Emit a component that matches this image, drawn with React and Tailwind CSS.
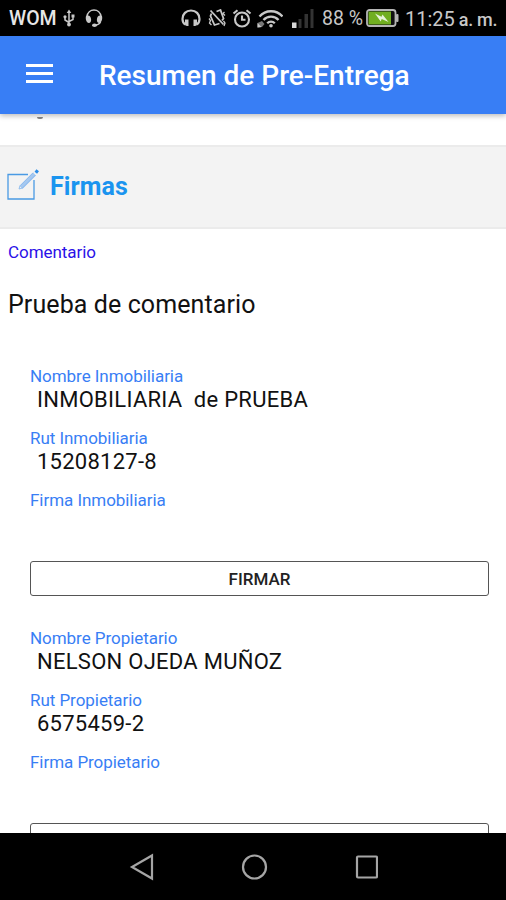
import React from 'react';

const people = [
  { role: 'Inmobiliaria', name: 'INMOBILIARIA  de PRUEBA', rut: '15208127-8' },
  { role: 'Propietario', name: 'NELSON OJEDA MUÑOZ', rut: '6575459-2' },
];

function StatusBar() {
  return (
    <div className="h-9 shrink-0 bg-black text-[#c8c8c8] flex items-center pl-[9px] whitespace-nowrap">
      <span className="w-[54px] text-[19.5px] font-medium leading-none text-[#e6e6e6] pt-[2px]">WOM</span>

      {/* usb */}
      <svg className="w-3 h-[18px] mr-[10px]" viewBox="0 0 12 18" fill="none" stroke="currentColor" strokeWidth="1.5">
        <path d="M6 3v13M2 8v3l4 2.500M10 7v3.500l-4 2" />
        <path d="M6 0.500l2.300 3.500H3.700z" fill="currentColor" stroke="none" />
        <circle cx="6" cy="15.500" r="1.900" fill="currentColor" stroke="none" />
        <circle cx="2" cy="7.800" r="1.600" fill="currentColor" stroke="none" />
        <path d="M8.500 5.500h3v3h-3z" fill="currentColor" stroke="none" />
      </svg>

      {/* headset */}
      <svg className="w-[18px] h-[18px] mr-[78px]" viewBox="0 0 18 18" fill="none" stroke="currentColor" strokeWidth="1.600">
        <path d="M2 9V7.500C2.500 3.500 5.500 1 9 1s6.500 2.500 7 6.500V9" />
        <path d="M1 7c3-1.300 4.800.3 5.100 3.200.2 2.300-.6 3.800-2.300 3.800C1.500 13.700.200 10 1 7zM17 7c-3-1.300-4.800.3-5.100 3.200-.2 2.300.6 3.800 2.300 3.800 2.300-.3 3.600-4 2.800-7z" fill="currentColor" stroke="none" />
        <path d="M15.500 13c-1 2-3 3-5.500 3.200" />
        <ellipse cx="9.500" cy="16.200" rx="2.500" ry="1.700" fill="currentColor" stroke="none" />
      </svg>

      {/* headphones */}
      <svg className="w-5 h-[18px] mr-[7px]" viewBox="0 0 20 18" fill="none" stroke="currentColor" strokeWidth="2.200">
        <path d="M4.500 15.500C2.500 14.500 1.500 12.500 1.500 10 1.500 5 5 1.500 10 1.500s8.500 3.500 8.500 8.500c0 2.500-1 4.500-3 5.500" />
        <path d="M4 10.500h3.500V17H6c-1.300 0-2-.8-2-2zM16 10.500h-3.500V17H14c1.300 0 2-.8 2-2z" fill="currentColor" stroke="none" />
      </svg>

      {/* vibrate off */}
      <svg className="w-[18px] h-[18px] mr-[6px]" viewBox="0 0 18 18" fill="none" stroke="currentColor" strokeWidth="1.800">
        <path d="M8.500 2.500l4-1.500 3 8.500-1.500 2M3.500 4.500L2.500 7l4 9 5-1.500" />
        <path d="M2.500 1.500l13 14" />
        <path d="M1 9.500l1.500 2L1.500 14l2 2M16.500 3l-1.500 1.500 2 2M15.500 12l1.500 2-1 3" strokeWidth="1.300" />
      </svg>

      {/* alarm */}
      <svg className="w-5 h-[19px] mr-[5px]" viewBox="0 0 20 19" fill="none" stroke="currentColor" strokeWidth="2.100">
        <circle cx="10" cy="10.500" r="7" />
        <path d="M10 6.500v4.300h3.500" />
        <path d="M1.500 4.500l4-3.300M18.500 4.500l-4-3.300" />
      </svg>

      {/* wifi with traffic arrow */}
      <svg className="w-[26px] h-[19px] mr-[9px]" viewBox="0 0 26 19" fill="none" stroke="currentColor" strokeWidth="2.300">
        <path d="M2.500 7.500c6-7 17-7 23 0M6.500 11c4-4.500 11-4.500 15 0M10.200 14.200c2.200-2.200 5.400-2.200 7.600 0" />
        <circle cx="14" cy="16.700" r="1.800" fill="currentColor" stroke="none" />
        <path d="M.5 14l4.500-2 2.500 3-2.500 3-4.500.5z" fill="#777" stroke="none" />
        <path d="M.5 18.500V14l4 4z" fill="currentColor" stroke="none" />
      </svg>

      {/* mobile signal */}
      <svg className="w-[22px] h-[19px] mr-[8px]" viewBox="0 0 22 19">
        <rect x="0" y="13.500" width="4.500" height="5.500" fill="#d8d8d8" />
        <path d="M6.500 10h3v9h-3zM12.500 5h3.500v14h-3.500zM18.500 0h3v19h-3z" fill="#333" />
      </svg>

      <span className="w-[44px] text-[19.5px] leading-none pt-[2px]">88 %</span>

      {/* battery */}
      <svg className="w-[33px] h-[18px] mr-[6px]" viewBox="0 0 33 18">
        <rect x="1" y="1" width="28.500" height="16" rx="2.500" fill="#111" stroke="#b5b5b5" strokeWidth="1.800" />
        <rect x="2.500" y="2.500" width="22.500" height="13" fill="#70ae20" />
        <rect x="30" y="5" width="2.500" height="8" rx="1" fill="#b5b5b5" />
        <path d="M9 4.500l6.500 3.300 1-2.300 6 7.500-6.800-3-1 2.500z" fill="#e6f2d8" />
      </svg>

      <span className="text-[20px] leading-none pt-[2px]">11:25</span>
      <span className="text-[18px] font-medium leading-none pt-[3px] ml-1 tracking-[-0.3px]">a. m.</span>
    </div>
  );
}

function Header() {
  return (
    <header className="relative z-10 h-[78px] shrink-0 bg-[#387ef5] text-white flex items-center shadow-[0_2px_5px_rgba(0,0,0,0.26)]">
      <button className="ml-[26px] w-[27px] flex flex-col gap-[5px] mb-[3px]" aria-label="Menu">
        <span className="h-[3px] w-full bg-white" />
        <span className="h-[3px] w-full bg-white" />
        <span className="h-[3px] w-full bg-white" />
      </button>
      <h1 className="ml-[46px] mt-px text-[28px] font-medium leading-8 whitespace-nowrap">Resumen de Pre-Entrega</h1>
    </header>
  );
}

function Label({ children }) {
  return <p className="h-[18px] text-[17px] leading-[18px] tracking-[-0.05px] text-[#387ef5]">{children}</p>;
}

function Person({ person }) {
  return (
    <div className="h-[262px] shrink-0 pl-[30px] pr-[17px]">
      <Label>Nombre {person.role}</Label>
      <p className="h-11 pl-[7px] text-[22px] leading-[29px] tracking-[0.27px] whitespace-pre">{person.name}</p>
      <Label>Rut {person.role}</Label>
      <p className="h-11 pl-[7px] text-[22px] leading-[29px] tracking-[0.25px]">{person.rut}</p>
      <Label>Firma {person.role}</Label>
      <button className="mt-[52px] h-[35px] w-full pt-[2px] border border-[#555] rounded-[3px] text-[17px] font-medium text-[#222]">
        FIRMAR
      </button>
    </div>
  );
}

export default function App() {
  return (
    <div className="w-[506px] h-[900px] flex flex-col overflow-hidden bg-white text-[#111] font-['Roboto',sans-serif]">
      <StatusBar />
      <Header />

      <main className="flex-1 min-h-0 overflow-hidden flex flex-col">
        {/* tail of the row scrolled under the header */}
        <div className="h-[31px] shrink-0 pt-[3px] pl-[37px]">
          <div className="w-[6px] h-[2px] rounded-b bg-[#888]" />
        </div>

        <div className="h-[84px] shrink-0 bg-[#f3f3f3] border-y-2 border-[#ebebeb] flex items-center pl-[7px] pb-[3px]">
          <svg className="w-8 h-[31px] mb-[3px]" viewBox="0 0 32 31" fill="none">
            <path d="M21 5.500H1v24.500h26V11" stroke="#4a9ae4" strokeWidth="1.300" />
            <path d="M14 18.500L27.500 5" stroke="#a5c8f0" strokeWidth="4" />
            <path d="M13 16.500l-1 3.500 3.500-1M13.300 16.500L26 3.800M15.500 19L28.500 6" stroke="#7fb4ec" strokeWidth="0.800" />
            <path d="M28.500 1.500l2.500 2" stroke="#2a8be6" strokeWidth="3" />
          </svg>
          <h2 className="ml-[11px] mt-[2px] text-[25px] font-bold leading-8 tracking-[0.1px] text-[#1a94ef]">Firmas</h2>
        </div>

        <div className="h-[138px] shrink-0 pl-2 pt-[14px]">
          <p className="text-[17px] leading-[19px] tracking-[-0.05px] text-[#2a10e8]">Comentario</p>
          <p className="mt-[27px] text-[25px] leading-8 tracking-[0.1px]">Prueba de comentario</p>
        </div>

        {people.map((person) => (
          <Person key={person.role} person={person} />
        ))}
      </main>

      <nav className="h-[67px] shrink-0 bg-black flex items-center justify-center text-[#a5a5a5]">
        <svg className="w-[250px] h-7" viewBox="0 0 250 28" fill="none" stroke="currentColor" strokeWidth="2.200">
          <path d="M24 2.500v23L4 14z" />
          <circle cx="126.500" cy="14" r="11.500" />
          <rect x="229" y="3.500" width="20" height="21" rx="1" />
        </svg>
      </nav>
    </div>
  );
}
